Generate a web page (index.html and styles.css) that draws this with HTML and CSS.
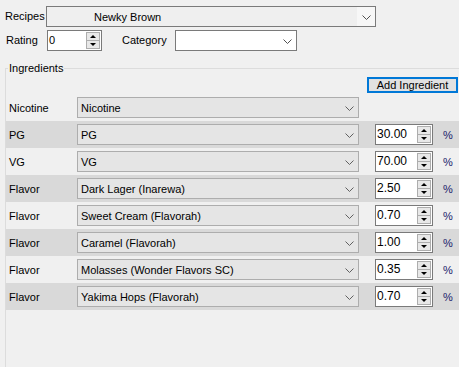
FILE: index.html
```html
<!DOCTYPE html>
<html lang="en">
<head>
    <meta charset="UTF-8">
    <title>Recipes</title>
    <link rel="stylesheet" href="styles.css">
</head>
<body>
    <div class="form">
        <div class="line recipe-line">
            <span class="lbl lbl-recipes">Recipes</span>
            <div class="combo combo-recipe">
                <span class="combo-text">Newky Brown</span>
                <span class="arrow arrow-light"><svg width="9" height="5" viewBox="0 0 9 5"><polyline points="0.5,0.5 4.5,4.5 8.5,0.5" fill="none" stroke="#505050" stroke-width="1"/></svg></span>
            </div>
        </div>
        <div class="line rating-line">
            <span class="lbl lbl-rating">Rating</span>
            <div class="spin spin-rating">
                <span class="spin-text">0</span>
                <span class="spin-btns"><span class="sb sb-up"></span><span class="sb sb-down"></span></span>
            </div>
            <span class="lbl lbl-category">Category</span>
            <div class="combo combo-category">
                <span class="combo-text"></span>
                <span class="arrow"><svg width="9" height="5" viewBox="0 0 9 5"><polyline points="0.5,0.5 4.5,4.5 8.5,0.5" fill="none" stroke="#505050" stroke-width="1"/></svg></span>
            </div>
        </div>

        <fieldset class="group">
            <legend>Ingredients</legend>
            <div class="add-line">
                <button class="add-btn">Add Ingredient</button>
            </div>
            <div class="rows">
                <div class="row">
                    <span class="row-lbl">Nicotine</span>
                    <div class="combo combo-ing"><span class="combo-text">Nicotine</span><span class="arrow"><svg width="9" height="5" viewBox="0 0 9 5"><polyline points="0.5,0.5 4.5,4.5 8.5,0.5" fill="none" stroke="#606060" stroke-width="1"/></svg></span></div>
                </div>
                <div class="row alt">
                    <span class="row-lbl">PG</span>
                    <div class="combo combo-ing"><span class="combo-text">PG</span><span class="arrow"><svg width="9" height="5" viewBox="0 0 9 5"><polyline points="0.5,0.5 4.5,4.5 8.5,0.5" fill="none" stroke="#606060" stroke-width="1"/></svg></span></div>
                    <div class="spin spin-amt"><span class="spin-text">30.00</span><span class="spin-btns"><span class="sb sb-up"></span><span class="sb sb-down"></span></span></div>
                    <span class="pct">%</span>
                </div>
                <div class="row">
                    <span class="row-lbl">VG</span>
                    <div class="combo combo-ing"><span class="combo-text">VG</span><span class="arrow"><svg width="9" height="5" viewBox="0 0 9 5"><polyline points="0.5,0.5 4.5,4.5 8.5,0.5" fill="none" stroke="#606060" stroke-width="1"/></svg></span></div>
                    <div class="spin spin-amt"><span class="spin-text">70.00</span><span class="spin-btns"><span class="sb sb-up"></span><span class="sb sb-down"></span></span></div>
                    <span class="pct">%</span>
                </div>
                <div class="row alt">
                    <span class="row-lbl">Flavor</span>
                    <div class="combo combo-ing"><span class="combo-text">Dark Lager (Inarewa)</span><span class="arrow"><svg width="9" height="5" viewBox="0 0 9 5"><polyline points="0.5,0.5 4.5,4.5 8.5,0.5" fill="none" stroke="#606060" stroke-width="1"/></svg></span></div>
                    <div class="spin spin-amt"><span class="spin-text">2.50</span><span class="spin-btns"><span class="sb sb-up"></span><span class="sb sb-down"></span></span></div>
                    <span class="pct">%</span>
                </div>
                <div class="row">
                    <span class="row-lbl">Flavor</span>
                    <div class="combo combo-ing"><span class="combo-text">Sweet Cream (Flavorah)</span><span class="arrow"><svg width="9" height="5" viewBox="0 0 9 5"><polyline points="0.5,0.5 4.5,4.5 8.5,0.5" fill="none" stroke="#606060" stroke-width="1"/></svg></span></div>
                    <div class="spin spin-amt"><span class="spin-text">0.70</span><span class="spin-btns"><span class="sb sb-up"></span><span class="sb sb-down"></span></span></div>
                    <span class="pct">%</span>
                </div>
                <div class="row alt">
                    <span class="row-lbl">Flavor</span>
                    <div class="combo combo-ing"><span class="combo-text">Caramel (Flavorah)</span><span class="arrow"><svg width="9" height="5" viewBox="0 0 9 5"><polyline points="0.5,0.5 4.5,4.5 8.5,0.5" fill="none" stroke="#606060" stroke-width="1"/></svg></span></div>
                    <div class="spin spin-amt"><span class="spin-text">1.00</span><span class="spin-btns"><span class="sb sb-up"></span><span class="sb sb-down"></span></span></div>
                    <span class="pct">%</span>
                </div>
                <div class="row">
                    <span class="row-lbl">Flavor</span>
                    <div class="combo combo-ing"><span class="combo-text">Molasses (Wonder Flavors SC)</span><span class="arrow"><svg width="9" height="5" viewBox="0 0 9 5"><polyline points="0.5,0.5 4.5,4.5 8.5,0.5" fill="none" stroke="#606060" stroke-width="1"/></svg></span></div>
                    <div class="spin spin-amt"><span class="spin-text">0.35</span><span class="spin-btns"><span class="sb sb-up"></span><span class="sb sb-down"></span></span></div>
                    <span class="pct">%</span>
                </div>
                <div class="row alt">
                    <span class="row-lbl">Flavor</span>
                    <div class="combo combo-ing"><span class="combo-text">Yakima Hops (Flavorah)</span><span class="arrow"><svg width="9" height="5" viewBox="0 0 9 5"><polyline points="0.5,0.5 4.5,4.5 8.5,0.5" fill="none" stroke="#606060" stroke-width="1"/></svg></span></div>
                    <div class="spin spin-amt"><span class="spin-text">0.70</span><span class="spin-btns"><span class="sb sb-up"></span><span class="sb sb-down"></span></span></div>
                    <span class="pct">%</span>
                </div>
            </div>
        </fieldset>
    </div>
</body>
</html>
```

FILE: styles.css
```css
* {
    margin: 0;
    padding: 0;
    box-sizing: border-box;
}

html, body {
    height: 100%;
}

body {
    font-family: 'Liberation Sans', Arial, sans-serif;
    font-size: 11px;
    color: #000;
    background: #f0f0f0;
    overflow: hidden;
}

.form {
    padding-top: 6px;
    width: 470px;
}

.line {
    display: flex;
    align-items: center;
    height: 21px;
}

.rating-line {
    margin-top: 3px;
}

.lbl {
    line-height: 13px;
}

.lbl-recipes {
    width: 46px;
    padding-left: 5px;
}

.lbl-rating {
    width: 47px;
    padding-left: 6px;
}

.lbl-category {
    width: 53px;
    margin-left: 20px;
}

/* combo boxes */
.combo {
    display: flex;
    align-items: center;
    height: 21px;
    border: 1px solid #adadad;
    background: #e5e5e5;
}

.combo-text {
    flex: 1;
    padding-left: 3px;
    white-space: nowrap;
    overflow: hidden;
}

.arrow {
    width: 18px;
    height: 100%;
    display: flex;
    align-items: center;
    justify-content: center;
    padding-top: 1px;
}

.combo-recipe {
    width: 330px;
    border-color: #7a7a7a;
    background: #efefef;
}

.combo-recipe .combo-text {
    padding-left: 47px;
}

.arrow-light {
    background: #f7f7f7;
}

.combo-category {
    width: 122px;
    border-color: #7a7a7a;
    background: #fff;
}

/* spin boxes */
.spin {
    display: flex;
    align-items: stretch;
    height: 21px;
    border: 1px solid #7a7a7a;
    background: #fff;
}

.spin-text {
    flex: 1;
    padding-left: 1px;
    line-height: 19px;
}

.spin-btns {
    width: 15px;
    display: flex;
    flex-direction: column;
    padding: 1px 1px 1px 0;
}

.sb {
    flex: 1;
    background: #e8e8e8;
    border: 1px solid #adadad;
    position: relative;
}

.sb-up {
    border-bottom: none;
}

.sb::after {
    content: '';
    position: absolute;
    left: 3px;
    width: 0;
    height: 0;
    border-left: 3px solid transparent;
    border-right: 3px solid transparent;
}

.sb-up::after {
    top: 2px;
    border-bottom: 3px solid #000;
}

.sb-down::after {
    top: 2px;
    border-top: 3px solid #000;
}

.spin-rating {
    width: 55px;
}

/* ingredients group */
.group {
    margin-top: 11px;
    margin-left: 5px;
    border: none;
    border-top: 1px solid #dcdcdc;
    border-left: 1px solid #dcdcdc;
    min-height: 320px;
}

.group legend {
    margin-left: 2px;
    padding: 0 1px;
    line-height: 13px;
}

.add-line {
    display: flex;
    justify-content: flex-end;
    padding-right: 12px;
    padding-top: 2px;
    height: 19px;
}

.add-btn {
    font-family: inherit;
    font-size: 11px;
    width: 91px;
    height: 16px;
    background: #e1e1e1;
    border: 2px solid #0078d7;
    color: #000;
    line-height: 12px;
}

.rows {
    display: flex;
    flex-direction: column;
}

.row {
    display: flex;
    align-items: center;
    height: 27px;
}

.row.alt {
    background: #d9d9d9;
}

.row-lbl {
    width: 71px;
    padding-left: 3px;
}

.combo-ing {
    width: 282px;
}

.spin-amt {
    width: 58px;
    margin-left: 16px;
}

.spin-amt .spin-text {
    font-size: 12px;
}

.pct {
    margin-left: 10px;
    color: #1a1a6a;
}
```
